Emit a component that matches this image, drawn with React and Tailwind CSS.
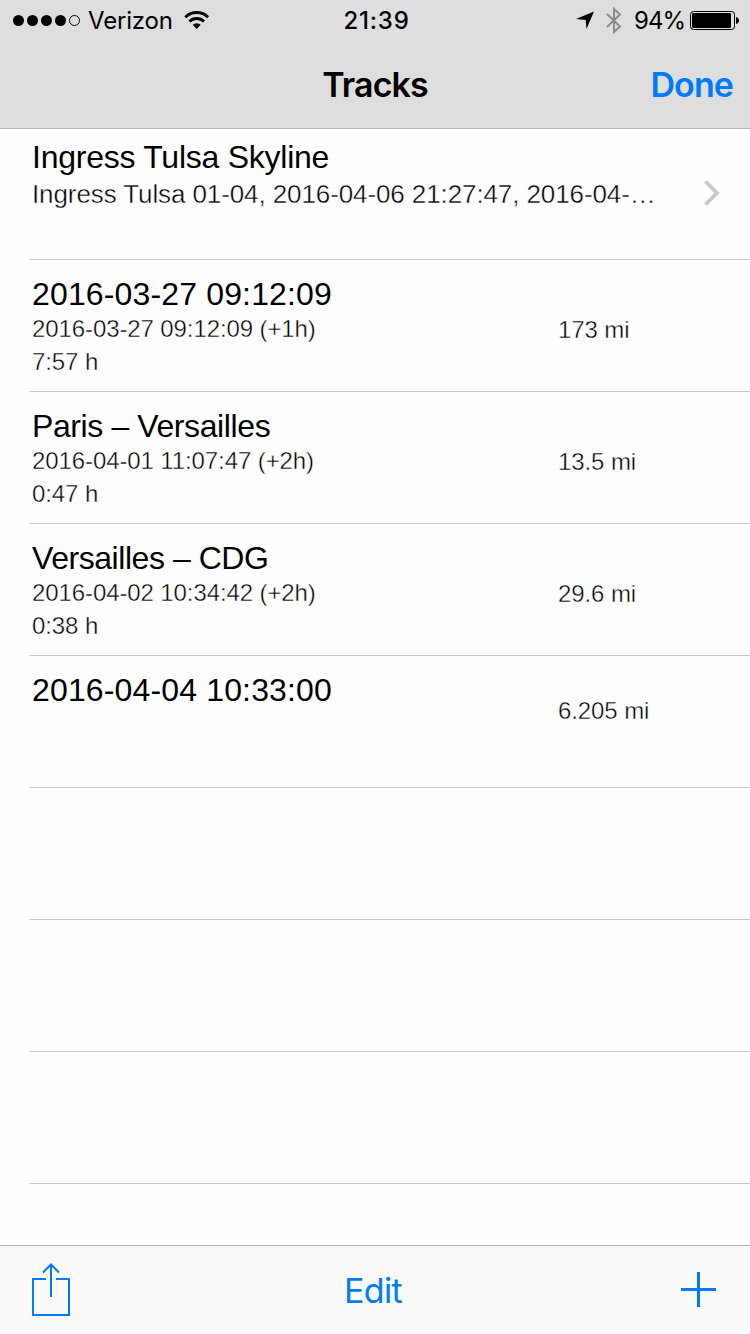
import React from "react";

const tracks = [
  { title: "2016-03-27 09:12:09", date: "2016-03-27 09:12:09 (+1h)", time: "7:57 h", distance: "173 mi", spacing: "tracking-[0.15px]" },
  { title: "Paris – Versailles", date: "2016-04-01 11:07:47 (+2h)", time: "0:47 h", distance: "13.5 mi", spacing: "tracking-[-0.4px]" },
  { title: "Versailles – CDG", date: "2016-04-02 10:34:42 (+2h)", time: "0:38 h", distance: "29.6 mi", spacing: "tracking-[-0.45px]" },
  { title: "2016-04-04 10:33:00", distance: "6.205 mi", spacing: "tracking-[0.15px]" },
];

const light = "[-webkit-text-stroke:0.4px_#fefefe]";

function StatusBar() {
  return (
    <div className="flex h-10 items-center">
      <div className="flex flex-1 items-center pl-[13px]">
        <svg width="68" height="12" viewBox="0 0 68 12">
          <circle cx="5.5" cy="6.5" r="5.5" />
          <circle cx="19.5" cy="6.5" r="5.5" />
          <circle cx="33.5" cy="6.5" r="5.5" />
          <circle cx="47.5" cy="6.5" r="5.5" />
          <circle cx="61.5" cy="6.5" r="5" fill="none" stroke="#000" />
        </svg>
        <span className="ml-[7px] w-[96px] pt-[2px] text-[24px] leading-10 tracking-[-0.2px]">Verizon</span>
        <svg width="26" height="20" viewBox="0 0 26 20" fill="none" stroke="#000" strokeWidth="2.8">
          <path d="M1.3 7.2a16.2 16.2 0 0 1 22.8 0" />
          <path d="M5.4 11.5a10.4 10.4 0 0 1 14.6 0" />
          <path d="M12.7 19l-4-4.2a5.7 5.7 0 0 1 8 0z" fill="#000" stroke="none" />
        </svg>
      </div>
      <span className="w-[70px] whitespace-nowrap pt-[2px] text-center text-[24px] font-medium leading-10 tracking-[0.8px]">21:39</span>
      <div className="flex flex-1 items-center justify-end pr-[10px]">
        <svg width="18" height="18" viewBox="0 0 18 18">
          <path d="M18 0.5L10.5 18L9.7 8.9L0 8.1z" />
        </svg>
        <svg className="ml-[12px]" width="16" height="27" viewBox="0 0 16 27" fill="none" stroke="#8a8a8a" strokeWidth="2">
          <path d="M1 7L14 19.5L8 25V2l6 5.5L1 20" />
        </svg>
        <span className="ml-[12px] w-[51px] pt-[2px] text-[24px] leading-10 tracking-[-0.9px]">94%</span>
        <svg className="ml-[5px] mt-px" width="50" height="20" viewBox="0 0 50 20">
          <rect x="0.5" y="0.5" width="44" height="18" rx="3" fill="none" stroke="#000" />
          <rect x="2" y="2" width="39" height="15" rx="1" />
          <path d="M46 6q3 1 3 3.5t-3 3.5z" />
        </svg>
      </div>
    </div>
  );
}

function Track({ track }) {
  return (
    <div className="flex h-[132px] border-b border-[#c8c7cc]">
      <div className="w-[526px] pl-[2px] pt-[16px]">
        <div className={"text-[32px] leading-[36px] " + track.spacing}>{track.title}</div>
        {track.date && <div className={"text-[24px] leading-[33px] tracking-[-0.1px] " + light}>{track.date}</div>}
        {track.time && <div className={"text-[24px] leading-[33px] tracking-[-0.1px] " + light}>{track.time}</div>}
      </div>
      <div className={(track.date ? "pt-[53px] " : "pt-[38px] ") + "pl-[2px] text-[24px] leading-[33px] tracking-[-0.1px] " + light}>
        {track.distance}
      </div>
    </div>
  );
}

export default function App() {
  return (
    <div className="flex h-[1334px] w-[750px] flex-col overflow-hidden bg-[#fefefe] font-['Liberation_Sans',sans-serif] text-black">
      <header className="h-[129px] shrink-0 border-b border-[#b2b2b2] bg-[#dedede] font-['Inter',sans-serif]">
        <StatusBar />
        <div className="grid h-[88px] grid-cols-3 items-center text-[34px]">
          <span className="col-start-2 text-center font-semibold tracking-[-0.9px]">Tracks</span>
          <button className="pr-[17px] text-right font-semibold tracking-[-0.9px] text-[#007aff]">Done</button>
        </div>
      </header>
      <main className="min-h-0 flex-1 overflow-hidden pl-[30px]">
        <div className="flex h-[131px] items-center border-b border-[#c8c7cc] pl-[2px]">
          <div className="h-full w-[672px] pt-[10px]">
            <div className="text-[32px] leading-[36px] tracking-[-0.25px]">Ingress Tulsa Skyline</div>
            <div className={"whitespace-nowrap pt-px text-[26px] leading-[36px] tracking-[-0.1px] " + light}>
              Ingress Tulsa 01-04, 2016-04-06 21:27:47, 2016-04-…
            </div>
          </div>
          <svg className="mb-[2px]" width="16" height="26" viewBox="0 0 16 26" fill="none" stroke="#c7c7cc" strokeWidth="3.8">
            <path d="M1.5 1.5L13 13L1.5 24.5" />
          </svg>
        </div>
        {tracks.map((track) => (
          <Track key={track.title} track={track} />
        ))}
        {[1, 2, 3].map((n) => (
          <div key={n} className="h-[132px] border-b border-[#c8c7cc]" />
        ))}
      </main>
      <footer className="grid h-[89px] shrink-0 grid-cols-3 items-center border-t border-[#b2b2b2] bg-[#f9f9f9] pl-8 pr-[34px] font-['Inter',sans-serif] text-[#007aff]">
        <button className="pb-[2px]">
          <svg width="38" height="53" viewBox="0 0 38 53" fill="none" stroke="currentColor" strokeWidth="2">
            <path d="M14 16H1v36h36V16H24M19 34V1M11 9.5L19 1.5l8 8" />
          </svg>
        </button>
        <button className="pr-[2px] pt-px text-center text-[34px] tracking-[-0.6px]">Edit</button>
        <button className="justify-self-end pb-[2px]">
          <svg width="35" height="35" viewBox="0 0 35 35" fill="none" stroke="currentColor" strokeWidth="3">
            <path d="M0 17.5h35M17.5 0v35" />
          </svg>
        </button>
      </footer>
    </div>
  );
}
